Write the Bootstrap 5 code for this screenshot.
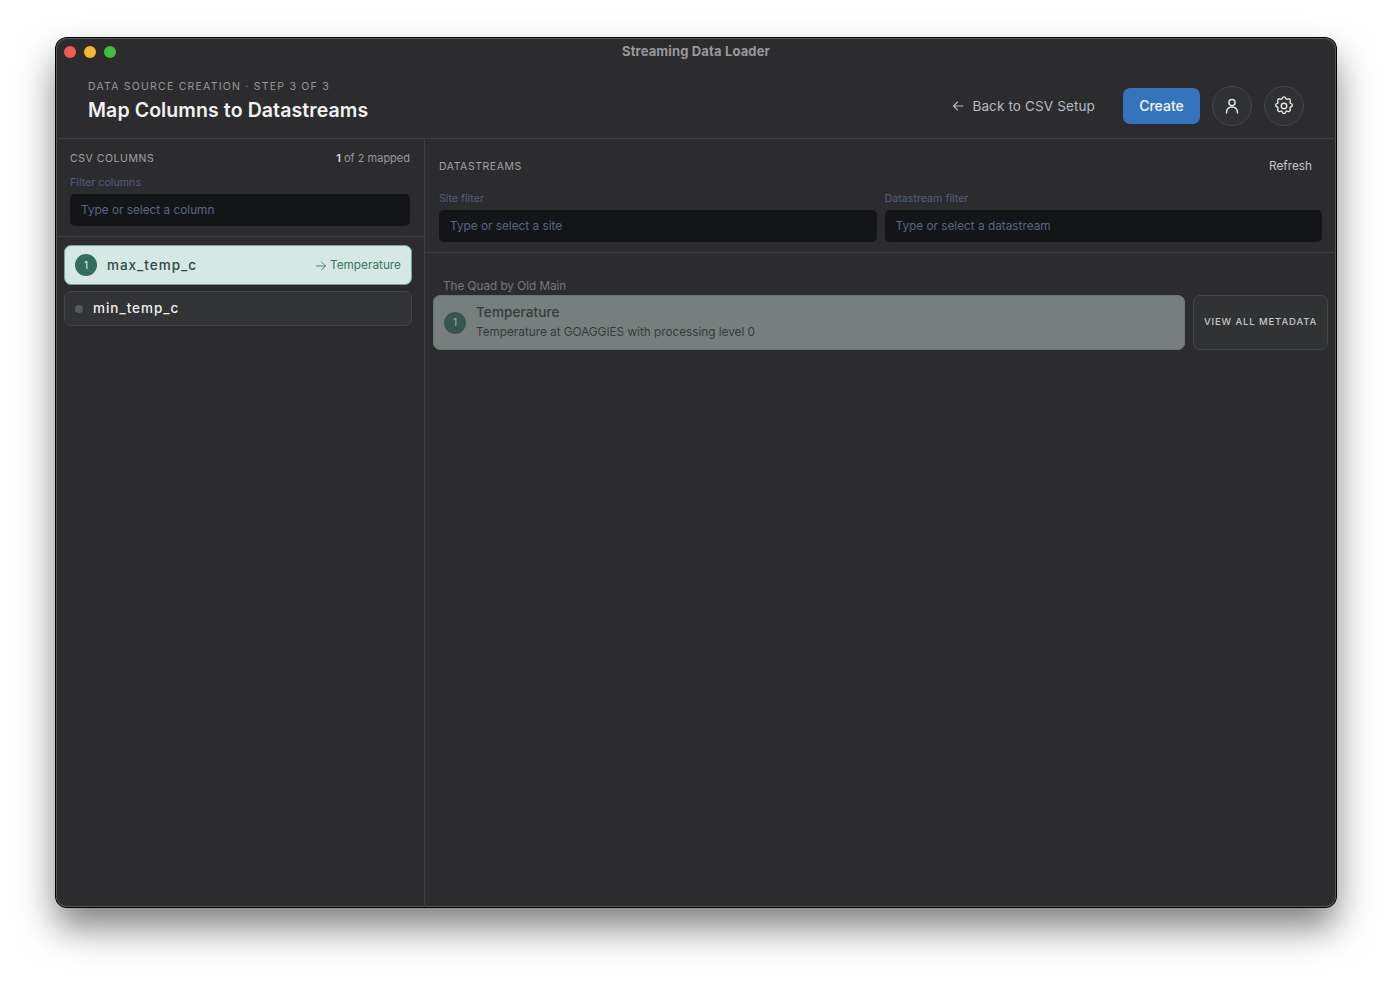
<!DOCTYPE html>
<html lang="en">
<head>
<meta charset="utf-8">
<title>Streaming Data Loader</title>
<link href="https://cdn.jsdelivr.net/npm/bootstrap@5.3.0/dist/css/bootstrap.min.css" rel="stylesheet">
<style>
html,body{height:981px;overflow:hidden;background:#fff;}
body{font-family:Inter,"Liberation Sans",sans-serif;padding:38px 56px 74px;}
.app-win{height:869px;background:#2c2c2e;border-radius:11px;box-shadow:0 0 0 1px #000,inset 0 0 0 1px #555,0 20px 36px rgba(0,0,0,.5);overflow:hidden;color:#fff;}
.title-bar{height:28px;padding:0 8px;position:relative;flex:none;}
.tl{width:12px;height:12px;border-radius:50%;}
.app-name{font-size:13px;font-weight:700;color:#97989a;letter-spacing:.14px;line-height:27px;}
.head-row{height:73px;padding:0 32px 2px;border-bottom:1px solid #3d3e40;flex:none;}
.eyebrow{font-size:10.5px;letter-spacing:1.23px;color:#96979a;line-height:14px;margin-bottom:3px;}
.page-title{font-size:19.5px;font-weight:600;color:#f1f1f1;line-height:26px;margin:0;letter-spacing:.1px;}
.head-acts{margin-top:10px;}
.back-btn{color:#b7bac2;font-size:13.5px;letter-spacing:.13px;background:none;border:0;padding:0;margin-right:28px;}
.create-btn{background:#3574bd;border:0;color:#f3f6fb;font-size:14px;font-weight:500;width:77px;height:36px;border-radius:7px;padding:0 0 1px;margin-right:12px;}
.circle-btn{width:40px;height:40px;border-radius:50%;background:#303133;border:1px solid #46474a;padding:0;margin-right:12px;color:#e8e8e8;}
.circle-btn:last-child{margin-right:0;}
.left-pane{width:369px;border-right:1px solid #3d3e40;flex:none;}
.pane-head{padding:0 14px 10px;border-bottom:1px solid #3d3e40;}
.count-row{height:32px;padding-top:8px;}
.sect-lbl{font-size:10.5px;letter-spacing:.55px;color:#a0a1a3;}
.count-txt{font-size:11px;color:#98999b;margin-top:-2px;}
.count-txt b{color:#d8d8d8;font-weight:600;}
.filter-lbl{font-size:10.7px;color:#525d7a;line-height:14px;margin-bottom:4px;display:block;}
.left-lbl{margin-top:5px;}
.filter-box{height:32px;background:#141517;border:0;border-radius:5px;color:#fff;font-size:11.8px;padding:0 11px;width:100%;display:block;}
.filter-box::placeholder{color:#5a6584;opacity:1;}
.col-mapped{height:40px;margin:8px 12px 0 8px;background:#d6e8e3;border:1px solid #74a597;border-radius:7px;padding:0 10px;color:#2f4a43;}
.col-free{height:35px;margin:6px 12px 0 8px;background:#323335;border:1px solid #434446;border-radius:7px;padding:0 10px;color:#efefef;}
.num-dot{width:22px;height:22px;border-radius:50%;background:#336b5d;color:#e6f2ee;font-size:10px;flex:none;margin-right:10px;}
.col-name{font-size:13.5px;font-weight:500;letter-spacing:.98px;}
.map-tgt{font-size:11.8px;color:#3d7566;padding-top:2px;}
.gray-dot{width:8px;height:8px;border-radius:50%;background:#58595b;flex:none;margin-right:10px;}
.refresh-lnk{font-size:11.8px;color:#c2c5cb;background:none;border:0;padding:0;margin-right:10px;}
.right-head{padding:0 14px 10px;border-bottom:1px solid #3d3e40;}
.ds-top{height:53px;padding-top:3px;}
.site-name{font-size:11.7px;color:#77787a;line-height:16px;margin:25px 0 1px 10px;}
.ds-card{flex:1;height:55px;background:#767f7d;border:1px solid #66786f;border-radius:7px;padding:0 10px;color:#363a3a;}
.ds-txt{margin-bottom:2px;}
.ds-title{font-size:13.5px;font-weight:500;line-height:18px;letter-spacing:.1px;}
.ds-sub{font-size:11.75px;line-height:16px;margin-top:3px;}
.num-dark{background:#35564e;color:#9fb3ad;}
.meta-btn{width:135px;height:55px;background:#313234;border:1px solid #454648;border-radius:7px;color:#c8c8c8;font-size:9.5px;font-weight:500;letter-spacing:.88px;padding:0;flex:none;}
</style>
</head>
<body>
<div class="app-win d-flex flex-column">
  <div class="title-bar d-flex align-items-center">
    <div class="d-flex gap-2 position-relative z-1">
      <span class="tl" style="background:#ee5c52"></span>
      <span class="tl" style="background:#f5b733"></span>
      <span class="tl" style="background:#43bc3d"></span>
    </div>
    <div class="app-name position-absolute top-0 start-0 end-0 text-center">Streaming Data Loader</div>
  </div>
  <div class="head-row d-flex align-items-center justify-content-between">
    <div>
      <div class="eyebrow">DATA SOURCE CREATION · STEP 3 OF 3</div>
      <h1 class="page-title">Map Columns to Datastreams</h1>
    </div>
    <div class="head-acts d-flex align-items-center">
      <button class="back-btn d-flex align-items-center gap-2">
        <svg width="12" height="12" viewBox="0 0 12 12" fill="none" stroke="currentColor" stroke-width="1.1" stroke-linecap="round" stroke-linejoin="round"><path d="M11 6H1.500M5.500 2 1.500 6l4 4"/></svg>
        Back to CSV Setup
      </button>
      <button class="create-btn">Create</button>
      <button class="circle-btn d-flex align-items-center justify-content-center" aria-label="Account">
        <svg width="16" height="16" viewBox="0 0 16 16" fill="none" stroke="currentColor" stroke-width="1.4" stroke-linecap="round"><circle cx="8" cy="4.600" r="3.100"/><path d="M2.500 15c0-3.600 2-6 5.500-6s5.500 2.400 5.500 6"/></svg>
      </button>
      <button class="circle-btn d-flex align-items-center justify-content-center" aria-label="Settings">
        <svg width="22" height="22" viewBox="0 0 24 24" fill="none" stroke="currentColor" stroke-width="1.500" stroke-linecap="round" stroke-linejoin="round"><circle cx="12" cy="12" r="3"/><path d="M10.300 3.300c.4-1.700 3-1.700 3.400 0a1.750 1.750 0 0 0 2.600 1.100c1.500-.9 3.300.9 2.400 2.400a1.750 1.750 0 0 0 1.100 2.600c1.700.4 1.700 3 0 3.400a1.750 1.750 0 0 0-1.100 2.600c.9 1.500-.9 3.300-2.400 2.400a1.750 1.750 0 0 0-2.600 1.100c-.4 1.700-3 1.700-3.400 0a1.750 1.750 0 0 0-2.600-1.100c-1.500.9-3.300-.9-2.400-2.400a1.750 1.750 0 0 0-1.100-2.600c-1.700-.4-1.700-3 0-3.400a1.750 1.750 0 0 0 1.100-2.600c-.9-1.500.9-3.300 2.400-2.400a1.750 1.750 0 0 0 2.600-1.100z"/></svg>
      </button>
    </div>
  </div>
  <div class="d-flex flex-grow-1">
    <div class="left-pane">
      <div class="pane-head">
        <div class="count-row d-flex justify-content-between align-items-center">
          <span class="sect-lbl">CSV COLUMNS</span>
          <span class="count-txt"><b>1</b> of 2 mapped</span>
        </div>
        <label class="filter-lbl left-lbl" for="f1">Filter columns</label>
        <input id="f1" class="filter-box" placeholder="Type or select a column">
      </div>
      <div class="col-mapped d-flex align-items-center">
        <span class="num-dot d-flex align-items-center justify-content-center">1</span>
        <span class="col-name flex-grow-1">max_temp_c</span>
        <span class="map-tgt d-flex align-items-center gap-1">
          <svg width="10" height="10" viewBox="0 0 10 10" fill="none" stroke="currentColor" stroke-width=".9" stroke-linecap="round" stroke-linejoin="round"><path d="M.5 5h9M5.500 1l4 4-4 4"/></svg>
          Temperature
        </span>
      </div>
      <div class="col-free d-flex align-items-center">
        <span class="gray-dot"></span>
        <span class="col-name">min_temp_c</span>
      </div>
    </div>
    <div class="flex-grow-1">
      <div class="right-head">
        <div class="ds-top d-flex justify-content-between align-items-center">
          <span class="sect-lbl">DATASTREAMS</span>
          <button class="refresh-lnk">Refresh</button>
        </div>
        <div class="row g-2">
          <div class="col-6">
            <label class="filter-lbl" for="f2">Site filter</label>
            <input id="f2" class="filter-box" placeholder="Type or select a site">
          </div>
          <div class="col-6">
            <label class="filter-lbl" for="f3">Datastream filter</label>
            <input id="f3" class="filter-box" placeholder="Type or select a datastream">
          </div>
        </div>
      </div>
      <div class="px-2">
        <div class="site-name">The Quad by Old Main</div>
        <div class="d-flex gap-2">
          <div class="ds-card d-flex align-items-center">
            <span class="num-dot num-dark d-flex align-items-center justify-content-center">1</span>
            <div class="ds-txt">
              <div class="ds-title">Temperature</div>
              <div class="ds-sub">Temperature at GOAGGIES with processing level 0</div>
            </div>
          </div>
          <button class="meta-btn">VIEW ALL METADATA</button>
        </div>
      </div>
    </div>
  </div>
</div>
<script src="https://cdn.jsdelivr.net/npm/bootstrap@5.3.0/dist/js/bootstrap.bundle.min.js"></script>
</body>
</html>
